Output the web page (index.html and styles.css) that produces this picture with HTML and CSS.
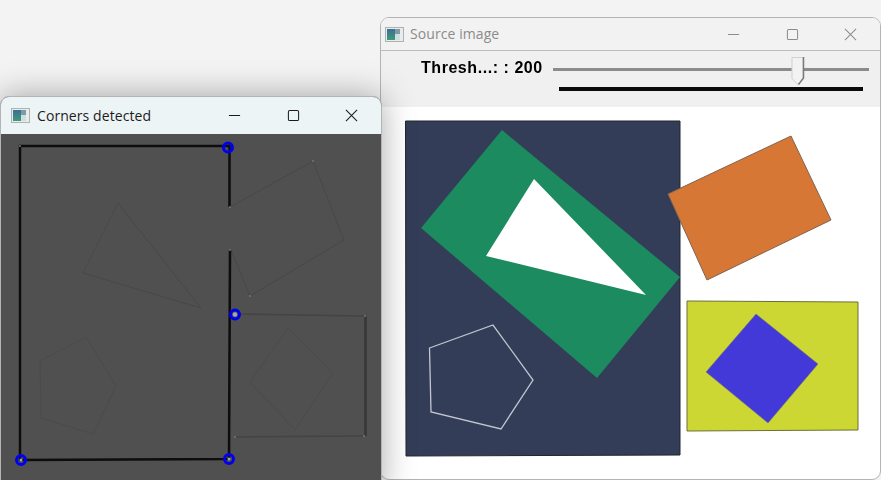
FILE: index.html
```html
<!DOCTYPE html>
<html lang="en">
  <head>
    <meta charset="UTF-8">
    <title>Corners detected</title>
    <link rel="stylesheet" href="styles.css">
  </head>
  <body>

    <section class="window window-source">
      <header class="titlebar">
        <svg class="app-icon" viewBox="0 0 19 15"><defs><linearGradient id="icon-a" x1="0" y1="0" x2="0" y2="1"><stop offset="0" stop-color="#3b6f96"/><stop offset="1" stop-color="#3f9a78"/></linearGradient></defs><rect x=".5" y=".5" width="18" height="14" fill="#e8ecec" stroke="#aeb2b4"/><rect x="2" y="2" width="8" height="11" fill="url(#icon-a)"/><rect x="10" y="2" width="5" height="5" fill="#7d9aa6"/><rect x="10" y="7" width="5" height="6" fill="#cfe0dc"/></svg>
        <h1>Source image</h1>
        <div class="controls">
          <svg viewBox="0 0 14 14"><path d="M1 7h12"/></svg>
          <svg viewBox="0 0 14 14"><rect x="1.5" y="1.5" width="11" height="11" rx="1.5"/></svg>
          <svg viewBox="0 0 14 14"><path d="M1 1l12 12M13 1L1 13"/></svg>
        </div>
      </header>

      <div class="toolbar">
        <div class="track-row">
          <label>Thresh...: : 200</label>
          <div class="track">
            <svg class="thumb" viewBox="0 0 14 28"><path d="M1 .5h11v21l-5 6-6-6z" fill="#f2f2f2" stroke="#d0d0d0"/><path d="M12.500 0v21l-5 6.500" fill="none" stroke="#7a7a7a" stroke-width="1.500"/></svg>
          </div>
        </div>
        <div class="track-line"></div>
      </div>

      <svg class="canvas canvas-source" viewBox="381 107 499 372">
        <path d="M405.500 121H680V455L406 456z" fill="#333d57" stroke="#23262e"/>
        <path d="M502 130L680 277 597 378 421 228z" fill="#1c8b60"/>
        <path d="M534 179L646 295 486 256z" fill="#fff"/>
        <path d="M429.500 348L493 325 533 380 501 429 431 412z" fill="none" stroke="#c3c6d0" stroke-width="1.300"/>
        <path d="M791 136L831 220 707 280 668 194z" fill="#d77736" stroke="#80634f"/>
        <path d="M687 301L858 302V430L687 431z" fill="#ccd733" stroke="#6d6f3a"/>
        <path d="M756 314L818 364 768 423 706 372z" fill="#4338d8" stroke="#777a70" stroke-width=".6"/>
      </svg>
    </section>

    <section class="window window-corners">
      <header class="titlebar">
        <svg class="app-icon" viewBox="0 0 19 15"><defs><linearGradient id="icon-b" x1="0" y1="0" x2="0" y2="1"><stop offset="0" stop-color="#3b6f96"/><stop offset="1" stop-color="#3f9a78"/></linearGradient></defs><rect x=".5" y=".5" width="18" height="14" fill="#e8ecec" stroke="#aeb2b4"/><rect x="2" y="2" width="8" height="11" fill="url(#icon-b)"/><rect x="10" y="2" width="5" height="5" fill="#7d9aa6"/><rect x="10" y="7" width="5" height="6" fill="#cfe0dc"/></svg>
        <h1>Corners detected</h1>
        <div class="controls">
          <svg viewBox="0 0 14 14"><path d="M1 7h12"/></svg>
          <svg viewBox="0 0 14 14"><rect x="1.500" y="1.500" width="11" height="11" rx="1.500"/></svg>
          <svg viewBox="0 0 14 14"><path d="M1 1l12 12M13 1L1 13"/></svg>
        </div>
      </header>

      <svg class="canvas canvas-corners" viewBox="1 134 380 346">
        <g class="faint">
          <path d="M230 207L313 161 344 240 250 296 231 250"/>
          <path d="M118 203L201 308 83 273z"/>
        </g>
        <g class="fainter">
          <path d="M40 361L86 337 116 386 93 434 41 418z"/>
          <path d="M288 328L333 373 295 430 250 382z"/>
        </g>
        <g class="faint-rect">
          <path d="M235 314L364 316"/>
          <path d="M235 437L364 436"/>
        </g>
        <path class="edge-soft" d="M365.500 316V436"/>
        <path class="edge" d="M229.500 207V146H20V460L229 459 230 250"/>
        <g class="dots">
          <circle cx="20" cy="146" r="1"/>
          <circle cx="230" cy="207" r="1"/>
          <circle cx="230" cy="250" r="1"/>
          <circle cx="313" cy="161" r="1"/>
          <circle cx="250" cy="296" r="1"/>
          <circle cx="365" cy="316" r="1"/>
          <circle cx="364" cy="436" r="1"/>
          <circle cx="235" cy="437" r="1"/>
        </g>
        <g class="corner">
          <circle cx="228" cy="147.500" r="4.500"/>
          <circle cx="235" cy="314.500" r="4.500"/>
          <circle cx="21" cy="460" r="4.500"/>
          <circle cx="229" cy="459" r="4.500"/>
        </g>
        <g class="corner-core">
          <circle cx="235" cy="314.500" r="2.200"/>
          <circle cx="21" cy="460" r="1.500"/>
          <circle cx="229" cy="459" r="1.500"/>
        </g>
      </svg>
    </section>

  </body>
</html>
```

FILE: styles.css
```css
html, body {
  margin: 0;
  padding: 0;
  height: 100%;
}

body {
  position: relative;
  overflow: hidden;
  background-color: #f3f3f3;
  font: 14px/1.4 "Open Sans", "Noto Sans", sans-serif;
}

/* Desktop windows sit on a free canvas */
.window {
  position: absolute;
  display: flex;
  flex-direction: column;
  box-sizing: border-box;
  overflow: hidden;
  border: solid 1px #b4b4b4;
  border-radius: 9px;
}

.window-source {
  left: 380px;
  top: 17px;
  width: 501px;
  height: 463px;
  background-color: #fff;
}

.window-corners {
  left: 0;
  top: 96px;
  width: 382px;
  height: 400px;
  background-color: #505050;
  box-shadow: 0 0 32px rgba(0, 0, 0, .34);
}

.titlebar {
  flex: none;
  display: flex;
  align-items: center;
  box-sizing: border-box;
  padding-left: 10px;
}

.window-source .titlebar {
  height: 33px;
  padding-left: 4px;
  background-color: #f2f2f2;
  border-bottom: solid 1px #bdbdbd;
}

.window-corners .titlebar {
  height: 37px;
  background-color: #edf4f6;
}

h1 {
  margin: 0 0 0 7px;
  flex: 1;
  font-size: 14px;
  font-weight: 400;
  letter-spacing: .08px;
  color: #1c1c1c;
}

.window-source h1 {
  color: #8b8b8b;
  margin-left: 6px;
}

.app-icon {
  flex: none;
  width: 19px;
  height: 15px;
}

.controls {
  display: flex;
  gap: 45.500px;
  padding-right: 23px;
}

.controls svg {
  width: 13px;
  height: 13px;
  fill: none;
  stroke: #1a1a1a;
  stroke-width: 1.100;
}

.window-source .controls svg {
  stroke: #8c8c8c;
}

.toolbar {
  flex: none;
  height: 56px;
  background-color: #f0f0f0;
  filter: blur(.35px);
}

.track-row {
  display: flex;
  align-items: center;
  height: 30px;
  padding-top: 3px;
  box-sizing: border-box;
}

.track-row label {
  flex: none;
  width: 122px;
  margin-left: 40px;
  font: 700 16px/1 "Liberation Sans", sans-serif;
  letter-spacing: .55px;
  color: #000;
}

.track {
  position: relative;
  flex: none;
  width: 316px;
  height: 3px;
  margin-left: 10px;
  margin-top: 4px;
  background-color: #8b8b8b;
}

.thumb {
  position: absolute;
  left: 238px;
  top: -11px;
  width: 14px;
  height: 28px;
}

.track-line {
  box-sizing: border-box;
  width: 304px;
  height: 4px;
  margin: 6px 0 0 178px;
  background-color: #0a0a0a;
}

.canvas {
  display: block;
  flex: none;
}

.canvas-source {
  width: 499px;
  height: 372px;
  filter: blur(.3px);
}

.canvas-corners {
  width: 380px;
  height: 346px;
  filter: blur(.35px);
}

.faint {
  fill: none;
  stroke: #484848;
}

.fainter {
  fill: none;
  stroke: #4b4b4b;
}

.faint-rect {
  fill: none;
  stroke: #444;
  stroke-width: 1.500;
}

.edge-soft {
  fill: none;
  stroke: #363636;
  stroke-width: 2.500;
}

.edge {
  fill: none;
  stroke: #0d0d0d;
  stroke-width: 2.500;
}

.dots {
  fill: #747474;
}

.corner {
  fill: none;
  stroke: #0000f0;
  stroke-width: 3;
}

.corner-core {
  fill: #a8a8a8;
}
```
